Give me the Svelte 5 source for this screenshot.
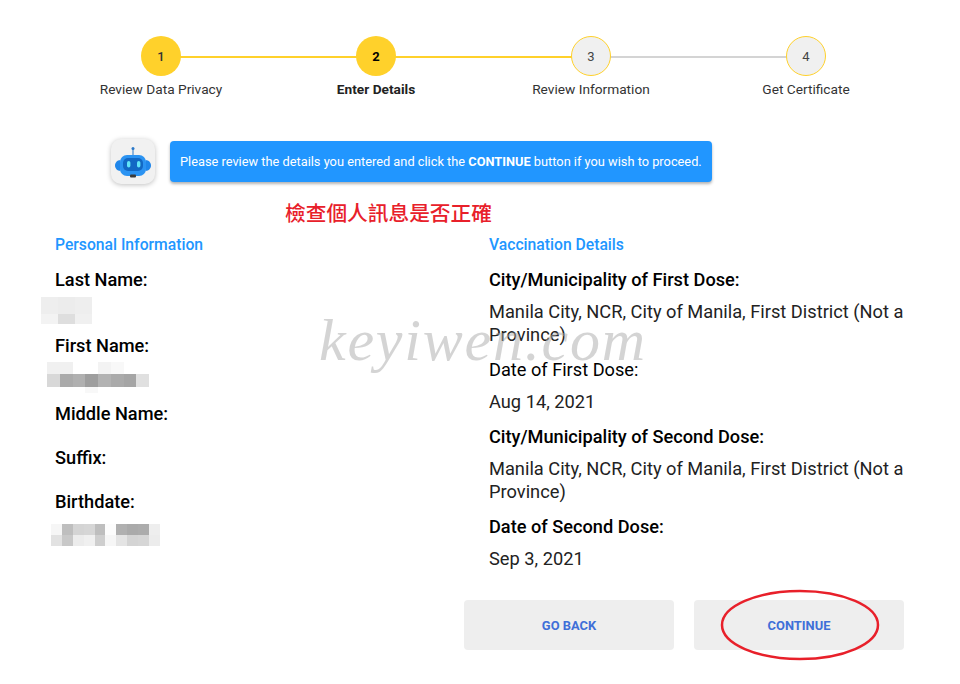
<script>
  const steps = [
    { n: 1, label: "Review Data Privacy", state: "done" },
    { n: 2, label: "Enter Details", state: "active" },
    { n: 3, label: "Review Information", state: "todo" },
    { n: 4, label: "Get Certificate", state: "todo" }
  ];

  // mosaic cells that hide the personal values, one shade per cell
  const lastName = [
    [238, 236, 238],
    [243, 222, 240]
  ];
  const firstName = [
    [240, 240, 255, 255, 243, 248, 255, 255],
    [216, 170, 176, 158, 178, 170, 165, 224],
    [255, 255, 255, 248, 255, 255, 255, 255]
  ];
  const birthdate = [
    [246, 190, 212, 214, 190, 252, 176, 170, 172, 238],
    [226, 200, 236, 240, 206, 246, 228, 212, 214, 236]
  ];
</script>

<main class="page">
  <ol class="stepper">
    {#each steps as step, i}
      <li class="step {step.state}" class:lit={i === 0 || i === 1}>
        <span class="circle">{step.n}</span>
        <span class="label">{step.label}</span>
      </li>
    {/each}
  </ol>

  <div class="notice">
    <div class="bot">
      <svg viewBox="0 0 44 44" width="44" height="44">
        <circle cx="22" cy="8.500" r="1.500" fill="#2a78c8" />
        <rect x="21.500" y="9" width="1" height="7" fill="#2a78c8" />
        <path d="M9.500 20 C6 20 4 23 4 25.500 C4 28 6 31 9.500 31 Z" fill="#1f86ea" />
        <path d="M34.500 20 C38 20 40 23 40 25.500 C40 28 38 31 34.500 31 Z" fill="#1f86ea" />
        <rect x="9" y="15" width="26" height="21" rx="7" fill="#2b93f2" />
        <rect x="12" y="18" width="20" height="13" rx="5" fill="#1268c4" />
        <rect x="16" y="21" width="3.400" height="6.500" rx="1.700" fill="#62e4f7" />
        <rect x="26" y="21" width="3.400" height="6.500" rx="1.700" fill="#62e4f7" />
        <rect x="19" y="34.500" width="6" height="3" rx="1" fill="#3a3a3a" />
      </svg>
    </div>
    <p class="banner">Please review the details you entered and click the <b>CONTINUE</b> button if you wish to proceed.</p>
  </div>

  <p class="hint">檢查個人訊息是否正確</p>

  <div class="details">
    <section class="col left">
      <h2>Personal Information</h2>
      <h3>Last Name:</h3>
      <div class="mosaic last">
        {#each lastName as row}
          <div class="row">
            {#each row as v}<i style="background: rgb({v},{v},{v})"></i>{/each}
          </div>
        {/each}
      </div>
      <h3>First Name:</h3>
      <div class="mosaic first">
        {#each firstName as row}
          <div class="row">
            {#each row as v}<i style="background: rgb({v},{v},{v})"></i>{/each}
          </div>
        {/each}
      </div>
      <h3 class="gap">Middle Name:</h3>
      <h3 class="gap">Suffix:</h3>
      <h3>Birthdate:</h3>
      <div class="mosaic birth">
        {#each birthdate as row}
          <div class="row">
            {#each row as v}<i style="background: rgb({v},{v},{v})"></i>{/each}
          </div>
        {/each}
      </div>
    </section>

    <section class="col right">
      <h2>Vaccination Details</h2>
      <h3>City/Municipality of First Dose:</h3>
      <p>Manila City, NCR, City of Manila, First District (Not a Province)</p>
      <h3 class="light">Date of First Dose:</h3>
      <p>Aug 14, 2021</p>
      <h3>City/Municipality of Second Dose:</h3>
      <p>Manila City, NCR, City of Manila, First District (Not a Province)</p>
      <h3>Date of Second Dose:</h3>
      <p>Sep 3, 2021</p>
    </section>
  </div>

  <div class="actions">
    <button type="button">GO BACK</button>
    <button type="button" class="marked">
      CONTINUE
      <svg class="ring" viewBox="0 0 160 72" width="160" height="72">
        <ellipse cx="80" cy="36" rx="78" ry="34" fill="none" stroke="#e8202a" stroke-width="2.500" />
      </svg>
    </button>
  </div>

  <div class="watermark">keyiwen.com</div>
</main>

<style>
  :global(body) {
    margin: 0;
    background: #fff;
  }

  .page {
    position: relative;
    width: 960px;
    height: 684px;
    overflow: hidden;
    font-family: Roboto, "Noto Sans CJK TC", sans-serif;
    color: #111;
  }

  .stepper {
    list-style: none;
    margin: 0;
    padding: 36px 0 0 53.500px;
    display: grid;
    grid-template-columns: repeat(4, 215px);
  }

  .step {
    position: relative;
    display: flex;
    flex-direction: column;
    align-items: center;
    gap: 4px;
    padding-bottom: 1px;
  }

  .step:not(:last-child)::after {
    content: "";
    position: absolute;
    top: 20px;
    left: 50%;
    width: 100%;
    height: 2px;
    background: #d4d4d4;
  }

  .step.lit::after {
    background: #ffd12b;
  }

  .circle {
    position: relative;
    z-index: 1;
    box-sizing: border-box;
    width: 40px;
    height: 40px;
    border-radius: 50%;
    display: flex;
    align-items: center;
    justify-content: center;
    font-size: 13px;
    font-weight: 500;
    color: #333;
    background: #ffd12b;
  }

  .todo .circle {
    background: #f0f0f0;
    border: 1px solid #ffd12b;
    font-weight: 400;
    color: #444;
  }

  .active .circle {
    color: #000;
    font-weight: 700;
  }

  .label {
    font-size: 13.700px;
    line-height: 18px;
    color: #333;
    white-space: nowrap;
  }

  .active .label {
    font-weight: 700;
    color: #222;
  }

  .notice {
    display: flex;
    align-items: center;
    gap: 15px;
    margin: 40px 0 0 111px;
  }

  .bot {
    width: 44px;
    height: 45px;
    border-radius: 10px;
    background: #f1f1f1;
    box-shadow: 0 1px 5px rgba(0, 0, 0, 0.25);
    display: flex;
    align-items: center;
    justify-content: center;
  }

  .banner {
    margin: 0;
    width: 542px;
    height: 41px;
    box-sizing: border-box;
    padding: 0 10px;
    display: flex;
    align-items: center;
    white-space: pre-wrap;
    font-size: 12.800px;
    color: #fff;
    background: #2196ff;
    border-radius: 4px;
    box-shadow: 0 2px 3px rgba(0, 0, 0, 0.3);
  }

  .banner b {
    font-weight: 700;
  }

  .hint {
    margin: 17px 0 0 285px;
    font-size: 20.700px;
    line-height: 26px;
    font-weight: 500;
    color: #e8202a;
  }

  .details {
    display: grid;
    grid-template-columns: 434px 415px;
    margin: 7px 0 0 55px;
  }

  h2 {
    margin: 0 0 11.500px;
    font-size: 15.700px;
    line-height: 22px;
    font-weight: 500;
    color: #2196ff;
  }

  h3 {
    margin: 0;
    font-size: 18.200px;
    line-height: 23px;
    font-weight: 500;
    color: #000;
  }

  h3.gap {
    margin-bottom: 21px;
  }

  h3.light {
    font-weight: 400;
  }

  .col p {
    margin: 9px 0 12px;
    font-size: 18.250px;
    line-height: 23px;
    color: #222;
  }

  .mosaic {
    display: flex;
    flex-direction: column;
  }

  .row {
    display: flex;
  }

  .mosaic i {
    display: block;
  }

  .last {
    margin: 6px 0 10.500px -14px;
  }

  .last .row i {
    width: 17px;
    height: 17px;
  }

  .last .row:last-child i {
    height: 10px;
  }

  .first {
    margin: 4.500px 0 9px -8px;
  }

  .first .row i {
    width: 12.750px;
    height: 12.500px;
  }

  .first .row:last-child i {
    height: 6px;
  }

  .birth {
    margin: 11px 0 0 -4px;
  }

  .birth .row i {
    width: 10.900px;
    height: 11px;
  }

  .actions {
    position: absolute;
    top: 600px;
    left: 464px;
    display: flex;
    gap: 20px;
  }

  button {
    position: relative;
    width: 210px;
    height: 50px;
    padding: 1px 0 0;
    border: 0;
    border-radius: 4px;
    background: #eee;
    font-family: inherit;
    font-size: 12.900px;
    font-weight: 700;
    color: #3f6fd8;
  }

  .ring {
    position: absolute;
    left: 26px;
    top: -11px;
    pointer-events: none;
  }

  .watermark {
    position: absolute;
    left: 319px;
    top: 304px;
    font-family: "Liberation Serif", serif;
    font-style: italic;
    font-size: 60px;
    line-height: 72px;
    letter-spacing: 1.800px;
    color: rgba(170, 170, 170, 0.5);
    white-space: nowrap;
    pointer-events: none;
  }
</style>
